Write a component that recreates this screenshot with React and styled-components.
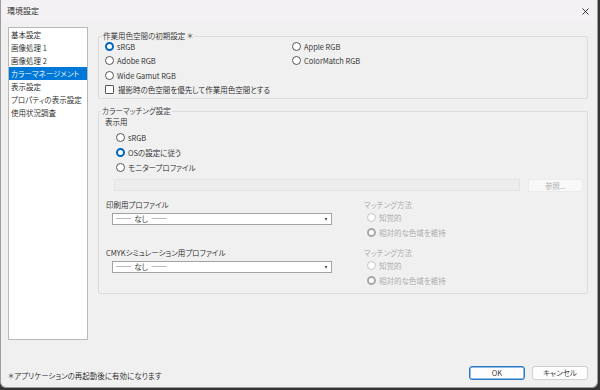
import React from "react";
import styled, { createGlobalStyle } from "styled-components";

const GlobalStyle = createGlobalStyle`
  html, body {
    margin: 0;
    padding: 0;
    background: #353535;
  }
  body {
    font-family: "Noto Sans CJK JP", "Liberation Sans", sans-serif;
    font-size: 7.5px;
    font-weight: 350;
    color: #262626;
    font-feature-settings: "palt";
  }
`;

const Window = styled.div`
  width: 598px;
  height: 388px;
  box-sizing: border-box;
  background: #f0f0f0;
  border: 1px solid #9c9c9c;
  border-top: none;
  border-radius: 0 0 6px 6px;
  display: flex;
  flex-direction: column;
  overflow: hidden;
`;

const TitleBar = styled.div`
  height: 22px;
  flex: none;
  display: flex;
  align-items: center;
  justify-content: space-between;
  padding: 0 6px 0 6px;
  background: #f3f1f3;
  line-height: 10px;
  font-size: 8px;
`;

const CloseButton = styled.div`
  width: 12px;
  height: 12px;
  display: flex;
  align-items: center;
  justify-content: center;
`;

const Main = styled.div`
  display: flex;
  padding: 5px 9px 0 7px;
`;

const Sidebar = styled.ul`
  list-style: none;
  margin: 0;
  padding: 0;
  width: 80px;
  height: 313px;
  flex: none;
  box-sizing: border-box;
  background: #fff;
  border: 1px solid #b8b8b8;
`;

const NavItem = styled.li`
  height: 13px;
  line-height: 13px;
  padding-left: 2px;
  white-space: nowrap;
  background: ${(p) => (p.$active ? "#0078d7" : "transparent")};
  color: ${(p) => (p.$active ? "#fff" : "#262626")};
`;

const Content = styled.div`
  flex: 1;
  margin-left: 10px;
  display: flex;
  flex-direction: column;
`;

const Group = styled.fieldset`
  margin: ${(p) => p.$top}px 0 0;
  padding: 0 ${(p) => p.$right || 6}px ${(p) => p.$bottom}px 6px;
  border: 1px solid #dcdcdc;
  border-radius: 2px;
  min-width: 0;
`;

const Legend = styled.legend`
  padding: 0 1px;
  margin-left: ${(p) => p.$shift}px;
  line-height: 10px;
  color: #333;
`;

const SpaceGrid = styled.div`
  display: grid;
  grid-template-columns: 187px 1fr;
  grid-auto-rows: 14.5px;
  margin-top: -2px;
`;

const Option = styled.label`
  display: flex;
  align-items: center;
  gap: 3px;
  height: ${(p) => p.$h || 14.5}px;
  margin-left: ${(p) => p.$indent || 0}px;
  white-space: nowrap;
  color: ${(p) => (p.$disabled ? "#a8a8a8" : "#262626")};
  grid-column: ${(p) => (p.$wide ? "1 / -1" : "auto")};
`;

const RadioMark = styled.span`
  width: 9px;
  height: 9px;
  box-sizing: border-box;
  border-radius: 50%;
  flex: none;
  background: #fff;
  border: ${(p) =>
    p.$checked
      ? `2.5px solid ${p.$disabled ? "#a9a9a9" : "#0067c0"}`
      : `1px solid ${p.$disabled ? "#c4c4c4" : "#555"}`};
`;

const CheckMark = styled.span`
  width: 9px;
  height: 9px;
  box-sizing: border-box;
  flex: none;
  background: #fff;
  border: 1px solid #555;
  border-radius: 1px;
  margin-right: 1px;
`;

const Caption = styled.div`
  line-height: ${(p) => p.$h || 10}px;
  color: ${(p) => (p.$disabled ? "#a8a8a8" : "#262626")};
  white-space: nowrap;
  margin-left: ${(p) => p.$indent || 0}px;
`;

const DisplayBlock = styled.div`
  display: flex;
  flex-direction: column;
`;

const RadioStack = styled.div`
  display: flex;
  flex-direction: column;
  margin-top: ${(p) => p.$top || 0}px;
`;

const FileRow = styled.div`
  display: flex;
  gap: 8px;
  margin: 4.5px 0 0 9px;
`;

const FileField = styled.div`
  flex: 1;
  height: 12px;
  box-sizing: border-box;
  background: #ededed;
  border: 1px solid #e3e3e3;
`;

const BrowseButton = styled.div`
  width: 55px;
  height: 13px;
  box-sizing: border-box;
  background: #f8f8f8;
  border: 1px solid #ebebeb;
  border-radius: 2px;
  color: #a9a9a9;
  line-height: 11px;
  text-align: center;
`;

const ProfileGrid = styled.div`
  display: grid;
  grid-template-columns: 259px 1fr;
  row-gap: 8.5px;
  margin-top: 8px;
`;

const ProfileCell = styled.div`
  display: flex;
  flex-direction: column;
`;

const Select = styled.div`
  position: relative;
  width: 220px;
  height: 12px;
  box-sizing: border-box;
  margin: 3px 0 0 7px;
  background: #fff;
  border: 1px solid #a2a2a2;
  padding-left: 3px;
  line-height: 10px;
  white-space: pre;
  &::after {
    content: "";
    position: absolute;
    right: 4px;
    top: 4px;
    border-top: 3px solid #222;
    border-left: 1.5px solid transparent;
    border-right: 1.5px solid transparent;
  }
`;

const Footer = styled.div`
  flex: 1;
  display: flex;
  align-items: flex-end;
  justify-content: space-between;
  padding: 0 9px 7px 7px;
`;

const Note = styled.div`
  line-height: 10px;
  margin-bottom: -1px;
`;

const ButtonRow = styled.div`
  display: flex;
  gap: 7px;
`;

const Button = styled.div`
  width: 56px;
  height: 14px;
  box-sizing: border-box;
  border-radius: 3px;
  background: #fdfdfd;
  border: 1px solid ${(p) => (p.$primary ? "#2a78c8" : "#d0d0d0")};
  box-shadow: ${(p) => (p.$primary ? "inset 0 0 0 0.5px #2a78c8" : "none")};
  line-height: 12px;
  text-align: center;
  color: #262626;
`;

const Radio = ({ checked, disabled, children, ...rest }) => (
  <Option $disabled={disabled} {...rest}>
    <RadioMark $checked={checked} $disabled={disabled} />
    {children}
  </Option>
);

const navItems = [
  "基本設定",
  "画像処理 1",
  "画像処理 2",
  "カラーマネージメント",
  "表示設定",
  "プロパティの表示設定",
  "使用状況調査",
];

const profiles = ["印刷用プロファイル", "CMYKシミュレーション用プロファイル"];

export default function App() {
  return (
    <>
      <GlobalStyle />
      <Window>
        <TitleBar>
          <span>環境設定</span>
          <CloseButton>
            <svg width="7" height="7" viewBox="0 0 7 7">
              <path d="M0.5 0.5 L6.5 6.5 M6.5 0.5 L0.5 6.5" stroke="#222" strokeWidth="0.9" />
            </svg>
          </CloseButton>
        </TitleBar>
        <Main>
          <Sidebar>
            {navItems.map((item, i) => (
              <NavItem key={item} $active={i === 3}>
                {item}
              </NavItem>
            ))}
          </Sidebar>
          <Content>
            <Group $top={4} $bottom={1}>
              <Legend $shift={-3}>作業用色空間の初期設定 ＊</Legend>
              <SpaceGrid>
                <Radio checked>sRGB</Radio>
                <Radio>Apple RGB</Radio>
                <Radio>Adobe RGB</Radio>
                <Radio>ColorMatch RGB</Radio>
                <Radio $wide>Wide Gamut RGB</Radio>
                <Option $wide>
                  <CheckMark />
                  撮影時の色空間を優先して作業用色空間とする
                </Option>
              </SpaceGrid>
            </Group>
            <Group $top={7} $bottom={5} $right={4}>
              <Legend $shift={-4}>カラーマッチング設定</Legend>
              <DisplayBlock>
                <Caption $h={12}>表示用</Caption>
                <RadioStack $top={1.5}>
                  <Radio $h={15} $indent={11}>sRGB</Radio>
                  <Radio $h={15} $indent={11} checked>OSの設定に従う</Radio>
                  <Radio $h={15} $indent={11}>モニタープロファイル</Radio>
                </RadioStack>
                <FileRow>
                  <FileField />
                  <BrowseButton>参照...</BrowseButton>
                </FileRow>
              </DisplayBlock>
              <ProfileGrid>
                {profiles.map((label) => (
                  <React.Fragment key={label}>
                    <ProfileCell>
                      <Caption $indent={1}>{label}</Caption>
                      <Select>{"──  なし  ──"}</Select>
                    </ProfileCell>
                    <ProfileCell>
                      <Caption $disabled>マッチング方法</Caption>
                      <RadioStack $top={0.5}>
                        <Radio $h={14.5} $indent={3} disabled>知覚的</Radio>
                        <Radio $h={14.5} $indent={3} disabled checked>相対的な色域を維持</Radio>
                      </RadioStack>
                    </ProfileCell>
                  </React.Fragment>
                ))}
              </ProfileGrid>
            </Group>
          </Content>
        </Main>
        <Footer>
          <Note>＊アプリケーションの再起動後に有効になります</Note>
          <ButtonRow>
            <Button $primary>OK</Button>
            <Button>キャンセル</Button>
          </ButtonRow>
        </Footer>
      </Window>
    </>
  );
}
